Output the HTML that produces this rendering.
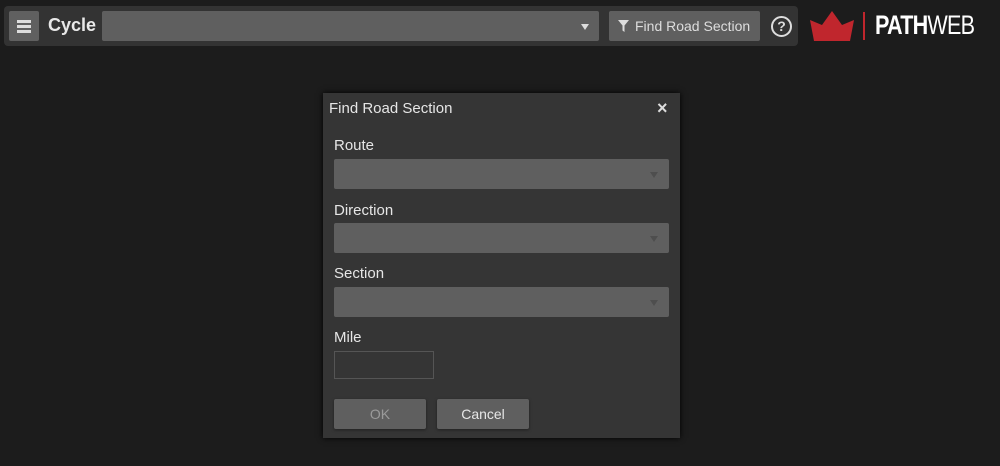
<!DOCTYPE html>
<html><head><style>
body{margin:0;width:1000px;height:466px;background:#1c1c1c;font-family:"Liberation Sans",sans-serif;position:relative;overflow:hidden}
.a{position:absolute}
.sel{position:absolute;left:11px;width:335px;height:30px;background:#5f5f5f;border-radius:2px}
.sel:after{content:"";position:absolute;right:11px;top:13px;border-left:4px solid transparent;border-right:4px solid transparent;border-top:6px solid #4e4e4e}
.lbl{position:absolute;left:11px;color:#e6e6e6;font-size:15px}
.btn{position:absolute;top:306px;width:92px;height:30px;background:#5f5f5f;border-radius:2px;text-align:center;line-height:30px;font-size:14px;box-shadow:0 1px 3px #0006}
</style></head><body>
<div class="a" style="left:4px;top:6px;width:794px;height:40px;background:#333;border-radius:4px"></div>
<div class="a" style="left:9px;top:11px;width:30px;height:30px;background:#606060;border-radius:2px">
<div class="a" style="left:8px;top:9px;width:14px;height:3px;background:#ddd"></div>
<div class="a" style="left:8px;top:14px;width:14px;height:3px;background:#ddd"></div>
<div class="a" style="left:8px;top:19px;width:14px;height:3px;background:#ddd"></div></div>
<div class="a" style="left:48px;top:15px;color:#e8e8e8;font-size:18px;font-weight:bold">Cycle</div>
<div class="a" style="left:102px;top:11px;width:497px;height:30px;background:#5f5f5f;border-radius:2px">
<div class="a" style="right:10px;top:13px;border-left:4px solid transparent;border-right:4px solid transparent;border-top:6px solid #ddd"></div></div>
<div class="a" style="left:609px;top:11px;width:151px;height:30px;background:#5f5f5f;border-radius:2px;color:#ddd;font-size:14px;line-height:31px">
<svg class="a" style="left:9px;top:9px" width="11" height="12" viewBox="0 0 11 12"><path d="M0 0H11L6.5 5.5V12L4.5 10.5V5.5Z" fill="#ddd"/></svg>
<span style="position:absolute;left:26px">Find Road Section</span></div>
<div class="a" style="left:771px;top:16px;width:17px;height:17px;border:2px solid #ddd;border-radius:50%;color:#ddd;font-size:14px;font-weight:bold;text-align:center;line-height:17px">?</div>
<svg class="a" style="left:810px;top:10px" width="44" height="31" viewBox="0 0 44 31"><path d="M0 10L12 15L22 1L32 15L44 10L40 31H4Z" fill="#c0262d"/></svg>
<div class="a" style="left:863px;top:12px;width:2px;height:28px;background:#c0262d"></div>
<div class="a" style="left:875px;top:10px;color:#fff;font-size:27px;font-weight:bold;letter-spacing:-1px;transform:scaleX(.8);transform-origin:left">PATH<span style="font-weight:normal">WEB</span></div>
<div class="a" style="left:323px;top:93px;width:357px;height:345px;background:#353535;box-shadow:0 0 6px #000">
<div class="a" style="left:6px;top:7px;color:#e6e6e6;font-size:15px">Find Road Section</div>
<div class="a" style="left:334px;top:5px;color:#ddd;font-size:18px;font-weight:bold">×</div>
<div class="lbl" style="top:44px">Route</div><div class="sel" style="top:66px"></div>
<div class="lbl" style="top:109px">Direction</div><div class="sel" style="top:130px"></div>
<div class="lbl" style="top:172px">Section</div><div class="sel" style="top:194px"></div>
<div class="lbl" style="top:236px">Mile</div>
<div class="a" style="left:11px;top:258px;width:98px;height:26px;border:1px solid #555"></div>
<div class="btn" style="left:11px;color:#9a9a9a">OK</div>
<div class="btn" style="left:114px;color:#e6e6e6">Cancel</div>
</div>
</body></html>
